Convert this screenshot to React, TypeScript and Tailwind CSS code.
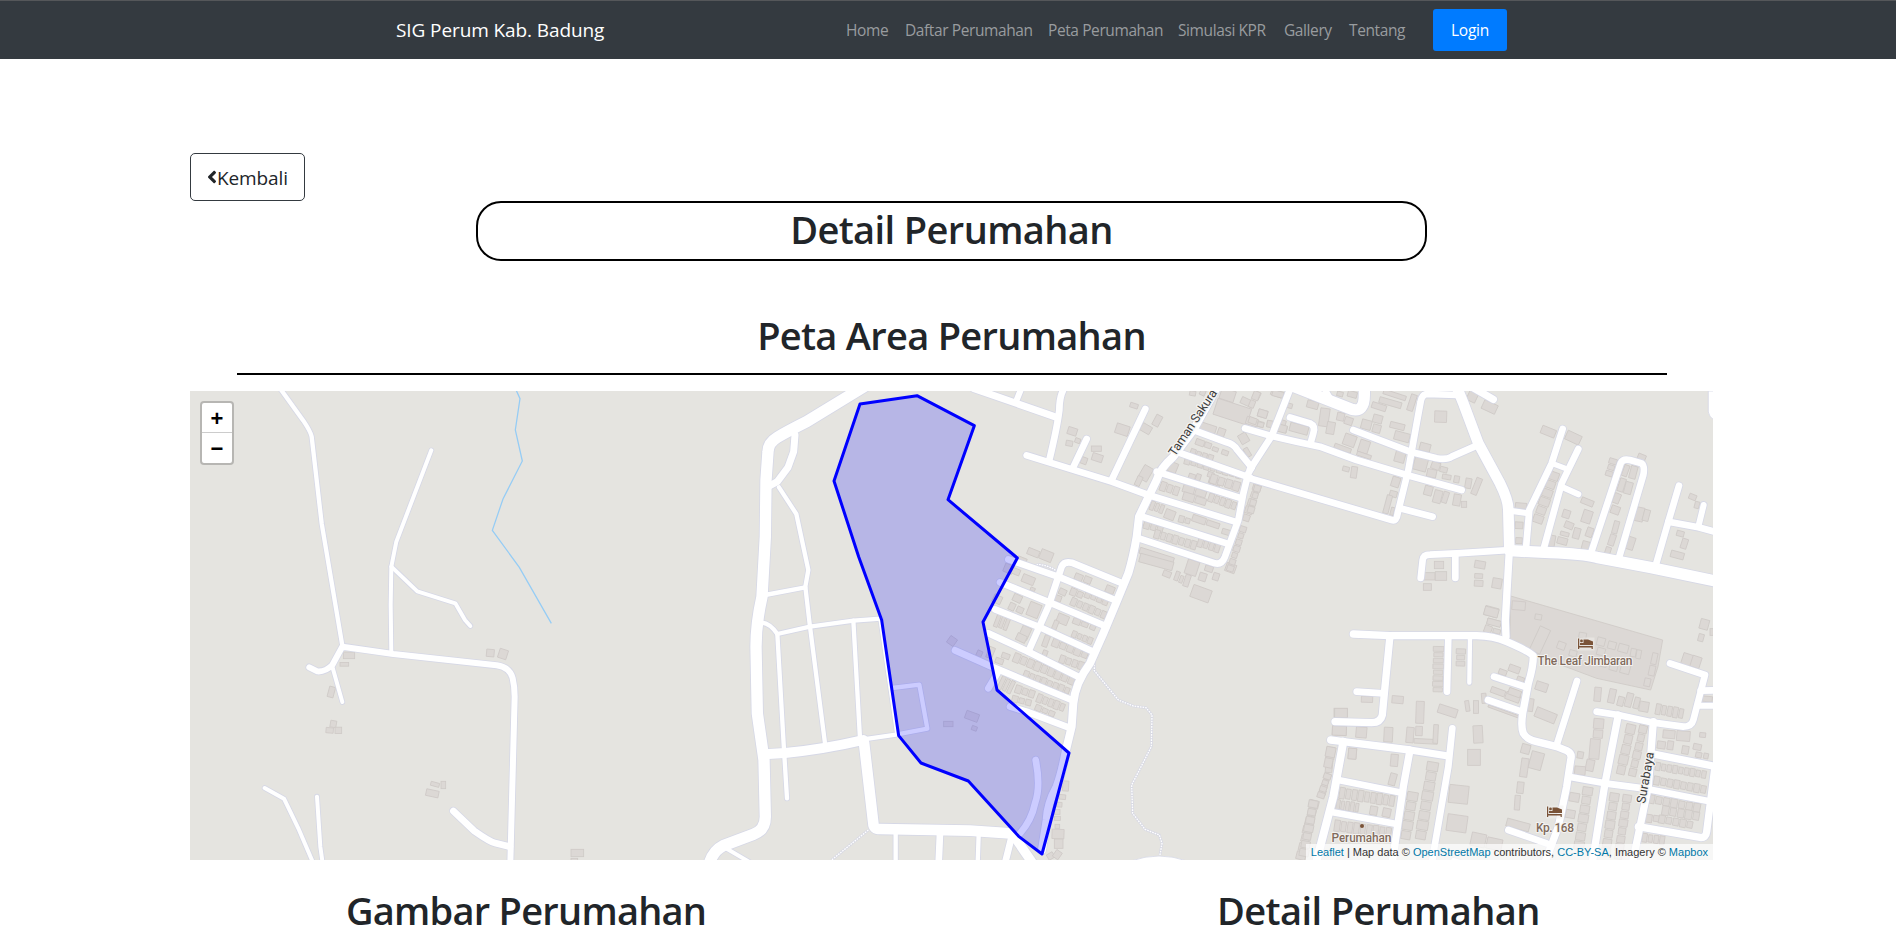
import React from "react";
import { FaAngleLeft } from "react-icons/fa";

type Road = [number, string];
type Box = [number, number, number, number, number];
type Row = [number, number, number, number, number, number];
type Sheet = { x: number; y: number; roads: Road[]; boxes: Box[]; rows: Row[]; trails?: string[] };

// Each sheet is a survey section: an origin on the map and geometry at three units per pixel.
const sheets: Sheet[] = [
  {
    x: 180,
    y: 380,
    roads: [
      [13, "M300 25L370 122Q392 155 395 170L425 430L487 797"],
      [18, "M388 862L412 874Q436 876 457 855L487 800L640 822L950 856Q990 862 998 895Q1004 920 1004 950L991 1450"],
      [12, "M754 211L649 485L634 560L632 675L634 820"],
      [12, "M634 560L712 634L826 670L855 720L871 738"],
      [12, "M457 860L487 966"],
      [12, "M254 1224L312 1256L355 1345L400 1450"],
      [12, "M411 1250L421 1400L428 1450"],
      [20, "M820 1293L883 1353Q930 1386 945 1389L990 1400"],
    ],
    boxes: [
      [507, 826, 34, 20, 0], [493, 853, 26, 11, 0], [454, 936, 18, 32, 15], [460, 1032, 18, 20, 10],
      [449, 1051, 22, 16, 5], [475, 1051, 20, 19, 0], [931, 819, 23, 22, 5], [969, 822, 26, 28, 18],
      [765, 1213, 26, 12, 15], [790, 1215, 14, 22, 0], [757, 1240, 38, 20, 12], [1192, 1419, 38, 22, 0],
      [1183, 1440, 20, 10, 0],
    ],
    rows: [],
  },
  {
    x: 690,
    y: 380,
    roads: [
      [34, "M530 15L350 125Q300 150 262 172Q235 188 234 215L228 300L226 470L216 650Q198 730 198 800L202 1000L222 1140L226 1310Q226 1350 190 1363L100 1397Q70 1412 58 1450"],
      [21, "M315 165L311 215L294 262L262 305L238 318"],
      [13, "M267 322L319 402L355 570L346 620L360 740L405 1090"],
      [13, "M225 645L346 622"],
      [13, "M216 728Q240 730 262 762L360 740L490 722L572 716"],
      [13, "M262 762L282 1110L291 1255"],
      [13, "M490 722L510 1075"],
      [10, "M570 716L620 1060"],
      [30, "M235 1122L285 1119Q400 1108 520 1080"],
      [13, "M520 1078L618 1064L712 1046L688 914L606 924"],
      [32, "M522 1088L550 1330Q550 1347 570 1347L840 1352L960 1360"],
      [13, "M617 1355V1450"],
      [20, "M750 1360L746 1450"],
      [13, "M866 1365L863 1450"],
      [20, "M965 1370L945 1450"],
      [28, "M970 1365L1035 1460"],
      [12, "M100 1400L185 1450"],
    ],
    boxes: [
      [786, 783, 24, 24, 35], [868, 821, 16, 18, 25], [846, 1009, 40, 24, 20], [775, 1032, 28, 16, 0],
      [853, 1045, 16, 13, 20],
    ],
    rows: [],
    trails: ["M535 1350L425 1440"],
  },
  {
    x: 960,
    y: 380,
    roads: [
      [24, "M775 15L700 150L640 230Q600 265 590 300L537 410L530 470Q520 530 505 580L468 670L430 760L390 850Q345 910 340 970L335 1040L318 1110Q305 1180 290 1220Q262 1270 260 1320L246 1410"],
      [21, "M40 25L290 112"],
      [18, "M170 60L184 25"],
      [20, "M312 25Q298 50 298 90Q292 140 268 240"],
      [20, "M200 226L455 305L565 345L825 425"],
      [20, "M380 177L338 265"],
      [20, "M556 87L455 300"],
      [20, "M590 275L845 355"],
      [20, "M640 212L870 293"],
      [20, "M705 152L800 187Q822 193 832 210L875 262"],
      [20, "M540 408L800 490"],
      [20, "M530 473L765 550Q785 555 795 530L835 420L850 340L865 280L875 262"],
      [20, "M145 538L300 592L460 658"],
      [20, "M205 815L265 680L305 560Q312 543 335 548L480 607"],
      [20, "M120 607L270 668L440 740"],
      [20, "M105 688L240 742L400 815"],
      [20, "M85 760L205 815L355 890"],
      [20, "M-15 811L95 860L335 960"],
      [20, "M150 980L200 995L325 1042"],
      [20, "M112 880L85 925"],
      [20, "M227 1140Q243 1220 225 1270Q215 1320 180 1360"],
    ],
    boxes: [
      [522, 77, 24, 14, 18], [337, 154, 28, 22, 18], [328, 190, 20, 16, 10], [353, 182, 16, 14, 20],
      [372, 242, 18, 20, 20], [409, 206, 30, 16, 0], [412, 233, 32, 22, 18], [487, 149, 40, 30, 18],
      [558, 146, 32, 24, 30], [592, 122, 20, 34, 28], [557, 280, 30, 44, 30], [536, 303, 16, 30, 25],
      [698, 40, 18, 14, 10], [728, 38, 16, 16, 25], [803, 45, 44, 34, 18], [862, 67, 40, 20, 25],
      [890, 46, 20, 22, 25], [950, 40, 34, 18, 20], [817, 95, 106, 50, 18], [876, 125, 36, 22, 18],
      [908, 101, 28, 22, 15], [902, 133, 18, 16, 15], [930, 132, 18, 18, 10], [960, 128, 34, 20, 18],
      [968, 146, 26, 20, 15], [742, 145, 52, 26, 18], [784, 157, 22, 24, 20], [851, 175, 26, 30, -30],
      [862, 217, 14, 28, -30], [720, 188, 26, 18, 20], [744, 196, 20, 16, 20], [766, 208, 18, 12, 20],
      [795, 218, 20, 14, 20], [638, 262, 28, 30, 22], [696, 290, 20, 16, 18], [715, 292, 14, 20, 18],
      [752, 284, 18, 16, 18], [764, 306, 36, 16, 18], [220, 518, 36, 20, 22], [259, 527, 38, 30, 22],
      [187, 537, 28, 9, 22], [146, 566, 28, 26, 22], [168, 575, 24, 18, 22], [205, 599, 38, 24, 22],
      [218, 628, 14, 10, 22], [356, 592, 24, 20, 22], [383, 600, 22, 20, 22], [450, 629, 26, 22, 22],
      [308, 636, 22, 18, 25], [293, 655, 22, 18, 20], [172, 655, 26, 22, 25], [156, 680, 18, 22, 25],
      [180, 690, 20, 18, 25], [222, 690, 36, 42, 22], [112, 658, 26, 24, 25], [308, 718, 34, 28, 22],
      [286, 735, 14, 28, 22], [696, 563, 36, 44, 18], [621, 582, 24, 18, 22], [651, 588, 12, 28, 20],
      [664, 598, 10, 22, 20], [681, 602, 16, 36, 18], [747, 566, 24, 18, 18], [728, 591, 22, 24, 18],
      [768, 590, 18, 22, 18], [723, 641, 58, 38, 20], [812, 564, 30, 26, 20], [258, 783, 16, 36, 20],
      [255, 820, 14, 18, 20], [195, 758, 28, 38, 25], [184, 774, 30, 22, 25], [137, 828, 24, 16, 20],
      [118, 843, 24, 16, 20], [92, 818, 18, 34, 22], [317, 1218, 18, 30, 3], [307, 1251, 20, 14, 5],
      [298, 1274, 16, 14, 3], [291, 1296, 18, 14, 0], [292, 1315, 18, 12, 0], [292, 1339, 14, 12, 0],
      [294, 1362, 36, 28, 2], [296, 1391, 26, 28, 0], [272, 1428, 20, 18, -30], [292, 1424, 20, 24, 35],
      [1142, 998, 40, 26, 0], [1138, 1052, 42, 28, 3], [1177, 1121, 24, 32, 5],
    ],
    rows: [
      [690, 215, 760, 238, 22, 4], [672, 242, 845, 290, 18, 9], [750, 294, 840, 322, 28, 4],
      [600, 316, 658, 336, 28, 3], [668, 322, 740, 345, 24, 2], [745, 350, 830, 380, 26, 5],
      [668, 346, 740, 368, 24, 2], [570, 374, 612, 390, 28, 3], [614, 398, 645, 410, 28, 1],
      [655, 415, 692, 425, 20, 2], [696, 412, 780, 440, 20, 2], [785, 452, 812, 460, 16, 1],
      [550, 432, 610, 450, 24, 3], [582, 460, 710, 498, 26, 7], [712, 486, 780, 507, 26, 4],
      [895, 310, 855, 425, 24, 5], [852, 438, 808, 575, 20, 7],
      [538, 510, 642, 543, 18, 1], [538, 532, 640, 560, 26, 1],
      [330, 632, 370, 648, 22, 2], [374, 640, 445, 668, 22, 4], [332, 662, 440, 708, 24, 6],
      [338, 720, 386, 738, 18, 2], [390, 736, 408, 744, 20, 1], [335, 760, 398, 785, 20, 4],
      [276, 785, 385, 828, 24, 5], [298, 835, 372, 860, 24, 4],
      [108, 712, 150, 728, 55, 3], [160, 830, 345, 905, 28, 9], [190, 880, 330, 935, 22, 8],
      [118, 905, 160, 925, 42, 3], [165, 925, 225, 945, 24, 3], [230, 952, 315, 985, 26, 5],
      [155, 955, 215, 970, 20, 3], [225, 980, 285, 1005, 18, 3],
      [1113, 1100, 1105, 1180, 24, 2], [1105, 1180, 1085, 1245, 20, 4], [1065, 1260, 1020, 1440, 28, 7],
    ],
    trails: [
      "M403 830L403 872L475 960L520 978L558 983L576 1005L574 1100L515 1215L518 1300L555 1348L598 1365L606 1390L600 1425",
      "M222 558Q245 545 292 574",
    ],
  },
  {
    x: 1250,
    y: 380,
    roads: [
      [20, "M-15 145L65 168L140 185L210 200L320 240L470 285L635 330"],
      [20, "M125 15L65 168L0 268"],
      [34, "M120 15L240 62L305 88Q343 98 343 45V15"],
      [18, "M220 20L240 55"],
      [20, "M120 112L180 130Q197 138 190 160L183 185"],
      [20, "M310 150L480 215L560 235Q590 240 605 230L680 197"],
      [20, "M0 295L425 420Q440 425 443 400L475 270L500 130L512 65Q515 45 530 42L620 45"],
      [32, "M620 20L640 70L685 190L750 310Q775 360 775 390L778 510"],
      [22, "M655 15L730 58"],
      [20, "M450 385L548 410"],
      [20, "M512 594L518 540Q520 524 540 524L620 520L780 510"],
      [34, "M780 512L900 518Q1000 522 1040 532L1200 562L1410 606"],
      [20, "M616 525V594"],
      [22, "M778 512L766 720L768 770"],
      [20, "M938 147L905 250L838 390L828 505"],
      [18, "M780 392L835 400"],
      [16, "M905 250L945 265"],
      [20, "M985 207L935 310L880 510"],
      [18, "M935 320L985 343"],
      [20, "M1022 522L1112 250Q1118 235 1140 240L1175 250Q1185 258 1180 285L1105 540"],
      [20, "M1287 317L1255 425L1216 560"],
      [20, "M1255 425L1345 442L1405 458"],
      [18, "M1361 375L1345 440"],
    ],
    boxes: [
      [18, 47, 20, 26, 22], [6, 72, 16, 22, 22], [38, 101, 28, 22, 18], [8, 122, 24, 18, 20],
      [32, 134, 18, 14, 15], [60, 132, 18, 20, 10], [84, 42, 34, 18, 15], [118, 77, 18, 14, 15],
      [97, 146, 26, 22, 15], [147, 146, 56, 26, 15], [188, 74, 34, 22, 15], [223, 112, 28, 54, 8],
      [242, 144, 24, 36, 10], [272, 110, 22, 24, 12], [296, 123, 24, 22, 18], [270, 42, 18, 14, 15],
      [307, 43, 28, 18, 15], [349, 134, 30, 28, 15], [383, 117, 28, 24, 15], [380, 146, 24, 24, 15],
      [387, 80, 44, 18, 18], [421, 68, 68, 18, 16], [434, 45, 70, 14, 18], [486, 68, 18, 50, 18],
      [442, 138, 44, 18, 14], [456, 170, 46, 26, 15], [299, 181, 36, 34, 20], [342, 200, 30, 38, 18],
      [278, 205, 52, 14, 20], [342, 226, 44, 12, 18], [525, 202, 32, 24, 15], [572, 110, 36, 34, 2],
      [450, 230, 30, 34, 15], [512, 250, 40, 44, 15], [545, 280, 28, 24, 12], [557, 257, 26, 22, 20],
      [581, 269, 22, 16, 15], [590, 291, 26, 14, 10], [620, 298, 16, 20, 10], [655, 310, 18, 30, 10],
      [680, 319, 18, 52, 22], [535, 332, 24, 28, 15], [563, 350, 24, 38, 15], [586, 352, 16, 34, 18],
      [621, 360, 22, 34, 10], [642, 373, 16, 18, 0], [288, 267, 20, 14, 15], [312, 277, 18, 34, 8],
      [437, 306, 24, 30, 18], [430, 342, 22, 18, 15], [413, 373, 16, 56, 15], [427, 394, 10, 24, 15],
      [667, 50, 28, 30, 25], [719, 81, 44, 28, 25], [895, 155, 44, 24, 22], [970, 173, 46, 28, 25],
      [813, 378, 34, 18, 5], [807, 436, 24, 20, 3], [807, 482, 20, 18, 3], [1012, 366, 38, 18, 22],
      [949, 402, 22, 24, 18], [1011, 410, 28, 38, 18], [957, 436, 26, 20, 22], [980, 460, 20, 32, 15],
      [944, 462, 26, 12, 15], [937, 483, 30, 20, 15], [1019, 457, 20, 28, 20], [1007, 497, 22, 26, 15],
      [905, 483, 20, 34, 10], [1115, 315, 18, 40, 18], [1135, 324, 22, 36, 15], [1127, 272, 16, 34, 20],
      [1150, 277, 20, 38, 15], [1100, 355, 20, 30, 22], [1096, 390, 26, 24, 20], [1097, 442, 16, 38, 15],
      [1086, 480, 18, 34, 18], [1074, 512, 16, 22, 18], [1142, 490, 22, 38, 18], [1175, 232, 24, 18, 22],
      [1168, 403, 26, 42, 12], [1189, 406, 18, 34, 15], [1328, 351, 22, 16, 22], [1341, 375, 14, 20, 15],
      [1291, 461, 22, 16, 15], [1303, 491, 18, 30, 18], [1282, 525, 40, 20, 15], [567, 555, 28, 22, 0],
      [538, 589, 34, 22, 0], [573, 588, 34, 26, 0], [532, 621, 24, 20, 0], [690, 554, 32, 22, 10],
      [686, 588, 24, 14, 3], [686, 610, 26, 18, 3], [741, 610, 28, 30, 10], [724, 695, 40, 28, 15],
      [732, 727, 40, 16, 15],
    ],
    rows: [
      [1092, 235, 1075, 290, 24, 3], [915, 275, 860, 430, 32, 6], [25, 315, 0, 400, 20, 4],
    ],
  },
  {
    x: 1290,
    y: 600,
    roads: [
      [22, "M190 102L300 107L560 107Q610 108 650 125Q720 155 730 168Q730 200 715 250L698 340Q692 380 700 400Q710 418 740 425L800 440L830 452Q848 460 842 480L830 560L805 680L760 800"],
      [22, "M300 107L285 260L277 345Q272 368 245 368L135 365"],
      [20, "M200 275L280 280"],
      [20, "M475 110L471 275"],
      [13, "M540 110L538 248"],
      [20, "M612 230L710 262"],
      [20, "M594 300L695 335"],
      [20, "M861 243L800 435"],
      [22, "M122 420L160 425L360 450L475 468"],
      [20, "M487 385L475 500L430 760L425 800"],
      [24, "M160 425L130 590L75 800"],
      [22, "M360 450L340 560L305 800"],
      [20, "M145 540L335 578"],
      [20, "M120 635L320 672"],
      [20, "M655 690L770 730"],
      [20, "M920 335L985 345L1090 368L1180 380Q1205 380 1210 360L1245 225L1140 190"],
      [20, "M1232 272L1300 270"],
      [18, "M1222 317H1300"],
      [22, "M985 345L945 550L905 800"],
      [20, "M845 532L945 550L1060 565L1250 602"],
      [22, "M1090 365L1075 560L1050 680L1025 800"],
      [22, "M1095 463L1280 500"],
      [22, "M1275 500L1250 695Q1248 715 1230 712L1045 680"],
      [12, "M490 780L560 800"],
    ],
    boxes: [
      [604, 36, 42, 26, 15], [612, 68, 42, 18, 15], [594, 88, 22, 22, 20], [620, 94, 22, 14, 15],
      [1243, 73, 26, 30, 15], [1233, 113, 16, 22, 15], [1265, 96, 10, 20, 0], [1193, 180, 34, 36, 18],
      [1218, 186, 28, 34, 18], [673, 207, 34, 20, 20], [638, 217, 24, 16, 20], [692, 238, 22, 14, 20],
      [755, 260, 36, 26, 18], [767, 346, 64, 30, 22], [721, 315, 18, 38, 8], [582, 295, 14, 30, -5],
      [624, 275, 44, 18, 20], [668, 292, 44, 22, 20], [674, 278, 38, 20, 20], [640, 334, 96, 7, 20],
      [231, 298, 34, 18, 2], [323, 299, 34, 22, 5], [390, 337, 24, 66, 2], [473, 333, 58, 26, 18],
      [532, 318, 12, 32, -8], [558, 321, 15, 38, 0], [153, 339, 38, 28, 0], [148, 392, 42, 28, 2],
      [214, 397, 32, 32, 5], [295, 404, 26, 44, 3], [360, 405, 22, 46, 5], [387, 393, 20, 28, 2],
      [407, 424, 70, 14, 3], [437, 402, 14, 56, 3], [564, 403, 28, 52, -3], [552, 472, 38, 48, 0],
      [187, 461, 24, 32, 5], [313, 481, 22, 36, 5], [308, 538, 20, 36, 15], [506, 583, 58, 54, 6],
      [501, 670, 60, 50, 8], [707, 447, 26, 28, 15], [739, 482, 38, 52, 15], [703, 503, 22, 56, 8],
      [691, 563, 20, 34, 6], [682, 608, 16, 44, 4], [684, 675, 70, 24, 15], [565, 720, 44, 40, 12],
      [613, 732, 46, 34, 12], [923, 283, 20, 42, 5], [966, 288, 20, 42, 12], [992, 304, 18, 28, 15],
      [1017, 300, 20, 42, 15], [1040, 309, 16, 34, 15], [1062, 320, 28, 30, 10], [926, 371, 30, 30, 5],
      [924, 402, 28, 24, 5], [914, 447, 30, 60, 5], [900, 496, 24, 34, 12], [870, 512, 32, 26, 5],
      [871, 465, 18, 20, 10], [853, 592, 30, 26, 10], [841, 642, 28, 24, 10], [1252, 297, 30, 16, 5],
      [1137, 403, 36, 24, 5], [1180, 408, 40, 30, 5], [1238, 405, 18, 14, 5], [1114, 435, 24, 22, 8],
      [1141, 436, 18, 26, 8], [1186, 450, 20, 24, 10], [1222, 441, 24, 18, 12], [1226, 465, 18, 16, 12],
      [1248, 468, 14, 16, 12], [1074, 655, 24, 24, 8], [1101, 656, 22, 18, 8], [251, 632, 22, 26, 10],
      [290, 638, 24, 26, 12],
    ],
    rows: [
      [446, 138, 443, 278, 32, 8], [513, 145, 511, 200, 28, 3], [1096, 326, 1182, 342, 32, 5],
      [1025, 372, 990, 525, 28, 5], [1062, 375, 1025, 530, 24, 6],
      [147, 578, 315, 604, 34, 9], [137, 613, 208, 624, 30, 5], [132, 676, 305, 700, 34, 9],
      [370, 575, 345, 720, 32, 5], [430, 485, 390, 720, 34, 8],
      [975, 578, 945, 770, 28, 7], [1013, 583, 983, 780, 26, 8], [895, 560, 865, 750, 30, 7],
      [1095, 498, 1250, 525, 24, 9], [1090, 540, 1250, 570, 26, 8], [1072, 595, 1232, 625, 26, 7],
      [1115, 630, 1230, 650, 28, 5], [1105, 656, 1210, 676, 24, 5], [1055, 712, 1125, 722, 26, 4],
      [125, 440, 112, 505, 28, 2], [115, 520, 90, 595, 22, 4], [72, 600, 40, 770, 28, 7],
    ],
  },
];

function at(s: Sheet) {
  return `translate(${s.x} ${s.y}) scale(0.33333)`;
}

function rowToBoxes([x1, y1, x2, y2, h, n]: Row): Box[] {
  const dx = x2 - x1;
  const dy = y2 - y1;
  const angle = (Math.atan2(dy, dx) * 180) / Math.PI;
  const step = Math.hypot(dx, dy) / n;
  return Array.from({ length: n }, (_, i) => {
    const t = (i + 0.5) / n;
    const trim = n > 1 ? (i * 5) % 3 : 0;
    return [x1 + dx * t, y1 + dy * t, step - 3 - trim, h - trim * 2, angle] as Box;
  });
}

function Building({ b }: { b: Box }) {
  const [x, y, w, h, a] = b;
  return <rect x={x - w / 2} y={y - h / 2} width={w} height={h} transform={`rotate(${a} ${x} ${y})`} />;
}

function HotelBlock() {
  const huts: Box[] = [
    [686, 17, 40, 26, 5], [745, 51, 20, 16, 10], [750, 120, 34, 78, 25], [814, 137, 24, 22, 20],
    [849, 160, 22, 18, 15], [878, 106, 22, 16, 10], [933, 125, 24, 24, 15], [966, 136, 24, 22, 15],
    [1000, 145, 30, 24, 15], [1030, 158, 16, 24, 10], [1046, 163, 14, 26, 10], [933, 155, 24, 22, 15],
    [938, 188, 26, 24, 15], [972, 197, 24, 30, 15], [1006, 206, 28, 30, 15], [1093, 176, 16, 34, 12],
    [1086, 212, 18, 30, 12], [1072, 247, 18, 24, 12],
  ];
  return (
    <g transform="translate(1290 600) scale(0.33333)">
      <path d="M662 -12L1118 120L1104 200L1082 270L920 235L800 190L660 130Z" />
      {huts.map((b, i) => (
        <Building key={i} b={b} />
      ))}
    </g>
  );
}

function AreaMap() {
  return (
    <svg viewBox="190 391 1523 469" className="block h-[469px] w-[1523px] bg-[#e5e4e0]">
      <g fill="#dcd8d5" stroke="#cfcac7" strokeWidth="2.5">
        <HotelBlock />
        {sheets.map((s, i) => (
          <g key={i} transform={at(s)}>
            {s.boxes.map((b, j) => (
              <Building key={j} b={b} />
            ))}
            {s.rows.flatMap(rowToBoxes).map((b, j) => (
              <Building key={`r${j}`} b={b} />
            ))}
          </g>
        ))}
      </g>
      <path
        d="M1006 25L1020 56L1006 150L1027 243L969 357L937 451L1018 562L1114 730"
        transform="translate(180 380) scale(0.33333)"
        fill="none"
        stroke="#95ccf5"
        strokeWidth="3.8"
      />
      {sheets.map((s, i) => (
        <g key={i} transform={at(s)} fill="none">
          {s.trails?.map((d, j) => (
            <g key={j}>
              <path d={d} stroke="#d8d9e4" strokeWidth="8" />
              <path d={d} stroke="#ffffff" strokeWidth="4" strokeDasharray="5 3" />
            </g>
          ))}
        </g>
      ))}
      {sheets.map((s, i) => (
        <g key={i} transform={at(s)} fill="none" stroke="#d6d8e6" strokeLinecap="round" strokeLinejoin="round">
          {s.roads.map(([w, d], j) => (
            <path key={j} d={d} strokeWidth={w + 5} />
          ))}
        </g>
      ))}
      {sheets.map((s, i) => (
        <g key={i} transform={at(s)} fill="none" stroke="#ffffff" strokeLinecap="round" strokeLinejoin="round">
          {s.roads.map(([w, d], j) => (
            <path key={j} d={d} strokeWidth={w} />
          ))}
        </g>
      ))}
      <path d="M1708.3 391V412Q1709 417 1714 420V391Z" fill="#fff" stroke="#d6d8e6" strokeWidth="0.8" />
      <path d="M1131 861Q1159 851 1187 861Z" fill="#fff" stroke="#d6d8e6" strokeWidth="0.8" />

      <g fontFamily="Roboto, 'Noto Sans', sans-serif" stroke="#f4f3f1" strokeWidth="2.5" strokeLinejoin="round" paintOrder="stroke">
        <g fontSize="12.5" fill="#3d3d3d">
          <text transform="translate(1175 457) rotate(-56.5)" textLength="77">Taman Sakura</text>
          <text transform="translate(1645 804) rotate(-80)" textLength="52">Surabaya</text>
        </g>
        <g fontSize="12" fontWeight="500" fill="#806a5c" strokeWidth="2">
          <text x="1537.5" y="664.5" textLength="95">The Leaf Jimbaran</text>
          <text x="1536" y="832" textLength="38">Kp. 168</text>
          <text x="1331.5" y="842" textLength="60">Perumahan</text>
        </g>
      </g>
      <circle cx="1362" cy="826" r="2" fill="#7a5338" />
      {[
        [1578, 638.5],
        [1547, 806.5],
      ].map(([x, y]) => (
        <g key={x} transform={`translate(${x} ${y})`} fill="#7a5338">
          <path d="M-1 -1H16.5V12H-1Z" fill="#f1efed" opacity="0.5" />
          <path d="M0 0H1.2V7.5H14.8V10.5H13.6V9H1.2V10.5H0Z" />
          <circle cx="3.5" cy="2.4" r="1.4" />
          <path d="M2 4.6H5.5V1H10L15 3V6.5H2Z" />
        </g>
      ))}

      <path
        d="M510 72L681 47L853 137L774 359L982 534L879 726L921 930L1137 1119L1056 1422L986 1369L835 1203L693 1149L626 1067L575 720L506 530L432 303Z"
        transform="translate(690 380) scale(0.33333)"
        fill="#0000ff"
        fillOpacity="0.2"
        stroke="#0000ff"
        strokeWidth="9"
        strokeLinejoin="round"
      />
    </svg>
  );
}

const links = [
  { label: "Home", cls: "w-[43px]" },
  { label: "Daftar Perumahan", cls: "w-[127px]" },
  { label: "Peta Perumahan", cls: "w-[114px]" },
  { label: "Simulasi KPR", cls: "w-[90px]" },
  { label: "Gallery", cls: "w-[49px]" },
  { label: "Tentang", cls: "w-[56px]" },
];

function Link({ children }: { children: React.ReactNode }) {
  return <a className="text-[#0078a8]">{children}</a>;
}

export default function App() {
  return (
    <div className="h-[926px] w-[1896px] overflow-hidden bg-white font-['Open_Sans','Noto_Sans',sans-serif] text-[#212529]">
      <nav className="flex h-[59px] items-center border-t border-[#55575a] bg-[#343a40] pl-[396px]">
        <a className="w-[449px] pt-px text-[19px] tracking-[-0.1px] whitespace-nowrap text-white">SIG Perum Kab. Badung</a>
        <div className="flex gap-4 pt-px pl-px text-[15.5px] tracking-[-0.4px] whitespace-nowrap text-[#999c9f]">
          {links.map((l) => (
            <a key={l.label} className={l.cls}>
              {l.label}
            </a>
          ))}
        </div>
        <button className="ml-[28px] h-[42px] w-[74px] rounded-[3px] bg-[#007bff] pt-px text-[15.5px] tracking-[-0.2px] text-white">
          Login
        </button>
      </nav>

      <main className="flex flex-col pt-[94px] pl-[190px]">
        <button className="flex h-12 w-[115px] items-center rounded-[5px] border border-[#343a40] pl-4 text-[19px]">
          <FaAngleLeft className="h-5 w-[10px] shrink-0" />
          <span className="pt-0.5 tracking-[-0.1px]">Kembali</span>
        </button>

        <div className="flex w-[1523px] flex-col items-center">
          <h1 className="flex h-[60px] w-[951px] justify-center rounded-[25px] border-2 border-black text-[38px] leading-[52px] font-semibold tracking-[-0.6px] whitespace-nowrap">
            Detail Perumahan
          </h1>
          <h1 className="mt-[47px] h-[65px] text-[38px] leading-[54px] font-semibold tracking-[-0.7px] whitespace-nowrap">
            Peta Area Perumahan
          </h1>
          <div className="h-[2px] w-[1430px] bg-black" />
        </div>

        <section className="relative mt-4 h-[469px] w-[1523px]">
          <AreaMap />
          <div className="absolute top-[10px] left-[10px] flex w-[34px] flex-col overflow-hidden rounded-[4px] border-2 border-black/20 bg-white bg-clip-padding font-['Liberation_Sans',sans-serif] text-[22px] font-bold text-black">
            <button className="h-[30px] border-b border-[#ccc] leading-[32px]">+</button>
            <button className="h-[30px] leading-[32px]">−</button>
          </div>
          <div className="absolute right-0 bottom-0 h-4 bg-white/70 px-[5px] font-['Liberation_Sans',sans-serif] text-[11px] leading-[17px] whitespace-nowrap text-[#333]">
            <Link>Leaflet</Link> | Map data © <Link>OpenStreetMap</Link> contributors, <Link>CC-BY-SA</Link>, Imagery ©{" "}
            <Link>Mapbox</Link>
          </div>
        </section>

        <div className="flex pt-[27px] text-[38px] leading-[46px] font-semibold whitespace-nowrap">
          <h1 className="ml-[156px] w-[871px] tracking-[-0.75px]">Gambar Perumahan</h1>
          <h1 className="tracking-[-0.6px]">Detail Perumahan</h1>
        </div>
      </main>
    </div>
  );
}
